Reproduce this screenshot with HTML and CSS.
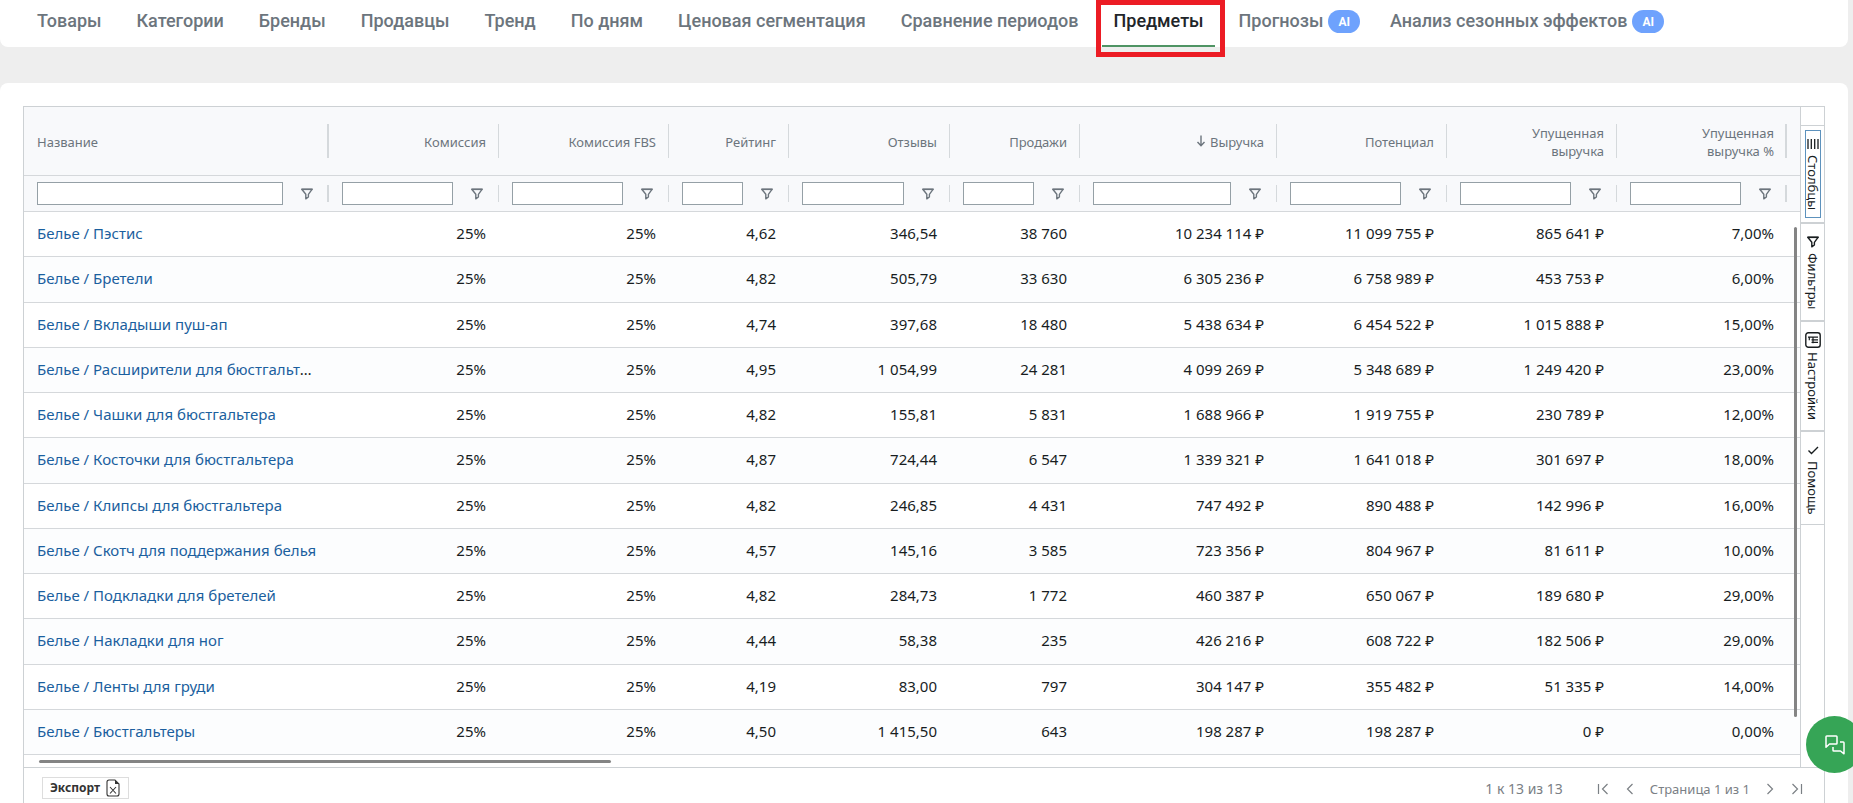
FILE: index.html
```html
<!DOCTYPE html>
<html lang="ru">
<head>
<meta charset="utf-8">
<title>Предметы</title>
<link rel="stylesheet" href="styles.css">
</head>
<body>
<svg class="sprite" aria-hidden="true">
  <symbol id="i-filter" viewBox="0 0 12 12"><path d="M.8 1.200h10.400L7.400 6.300v2.700L4.800 10.800V6.300z" fill="none" stroke="currentColor" stroke-width="1.400" stroke-linejoin="round"/><path d="M.5 1.400h11" stroke="currentColor" stroke-width="1.400"/></symbol>
</svg>

<nav class="tabs">
  <a class="tab" href="#">Товары</a>
  <a class="tab" href="#">Категории</a>
  <a class="tab" href="#">Бренды</a>
  <a class="tab" href="#">Продавцы</a>
  <a class="tab" href="#">Тренд</a>
  <a class="tab" href="#">По дням</a>
  <a class="tab" href="#">Ценовая сегментация</a>
  <a class="tab" href="#">Сравнение периодов</a>
  <a class="tab tab-active" href="#" aria-current="page">Предметы</a>
  <a class="tab tab-ai" href="#">Прогнозы <span class="badge">AI</span></a>
  <a class="tab tab-ai" href="#">Анализ сезонных эффектов <span class="badge">AI</span></a>
</nav>

<main class="panel">
  <div class="grid">
    <div class="grid-main">
      <div class="grid-view">
        <table class="table">
          <colgroup>
            <col class="c-name"><col class="c-l"><col class="c-l"><col class="c-xs"><col class="c-m"><col class="c-s"><col class="c-xl"><col class="c-l"><col class="c-l"><col class="c-l"><col>
          </colgroup>
          <thead>
            <tr class="head">
              <th class="edge">Название</th><th>Комиссия</th><th>Комиссия FBS</th><th>Рейтинг</th><th>Отзывы</th><th>Продажи</th>
              <th><svg class="sort" viewBox="0 0 10 12"><path d="M5 .5v10M1.500 7L5 10.800 8.500 7" fill="none" stroke="currentColor" stroke-width="1.400"/></svg>Выручка</th>
              <th>Потенциал</th><th>Упущенная<br>выручка</th><th class="edge">Упущенная<br>выручка %</th><th class="rest"></th>
            </tr>
            <tr class="filters">
              <td class="edge"><div class="filter"><input type="text" aria-label="Фильтр: Название"><button aria-label="Меню фильтра"><svg><use href="#i-filter"/></svg></button></div></td>
              <td><div class="filter"><input type="text" aria-label="Фильтр: Комиссия"><button aria-label="Меню фильтра"><svg><use href="#i-filter"/></svg></button></div></td>
              <td><div class="filter"><input type="text" aria-label="Фильтр: Комиссия FBS"><button aria-label="Меню фильтра"><svg><use href="#i-filter"/></svg></button></div></td>
              <td><div class="filter"><input type="text" aria-label="Фильтр: Рейтинг"><button aria-label="Меню фильтра"><svg><use href="#i-filter"/></svg></button></div></td>
              <td><div class="filter"><input type="text" aria-label="Фильтр: Отзывы"><button aria-label="Меню фильтра"><svg><use href="#i-filter"/></svg></button></div></td>
              <td><div class="filter"><input type="text" aria-label="Фильтр: Продажи"><button aria-label="Меню фильтра"><svg><use href="#i-filter"/></svg></button></div></td>
              <td><div class="filter"><input type="text" aria-label="Фильтр: Выручка"><button aria-label="Меню фильтра"><svg><use href="#i-filter"/></svg></button></div></td>
              <td><div class="filter"><input type="text" aria-label="Фильтр: Потенциал"><button aria-label="Меню фильтра"><svg><use href="#i-filter"/></svg></button></div></td>
              <td><div class="filter"><input type="text" aria-label="Фильтр: Упущенная выручка"><button aria-label="Меню фильтра"><svg><use href="#i-filter"/></svg></button></div></td>
              <td class="edge"><div class="filter"><input type="text" aria-label="Фильтр: Упущенная выручка %"><button aria-label="Меню фильтра"><svg><use href="#i-filter"/></svg></button></div></td>
              <td class="rest"></td>
            </tr>
          </thead>
          <tbody>
            <tr><td><a href="#">Белье / Пэстис</a></td><td>25%</td><td>25%</td><td>4,62</td><td>346,54</td><td>38 760</td><td>10 234 114 ₽</td><td>11 099 755 ₽</td><td>865 641 ₽</td><td>7,00%</td><td></td></tr>
            <tr><td><a href="#">Белье / Бретели</a></td><td>25%</td><td>25%</td><td>4,82</td><td>505,79</td><td>33 630</td><td>6 305 236 ₽</td><td>6 758 989 ₽</td><td>453 753 ₽</td><td>6,00%</td><td></td></tr>
            <tr><td><a href="#">Белье / Вкладыши пуш-ап</a></td><td>25%</td><td>25%</td><td>4,74</td><td>397,68</td><td>18 480</td><td>5 438 634 ₽</td><td>6 454 522 ₽</td><td>1 015 888 ₽</td><td>15,00%</td><td></td></tr>
            <tr><td><a href="#">Белье / Расширители для бюстгальтера</a></td><td>25%</td><td>25%</td><td>4,95</td><td>1 054,99</td><td>24 281</td><td>4 099 269 ₽</td><td>5 348 689 ₽</td><td>1 249 420 ₽</td><td>23,00%</td><td></td></tr>
            <tr><td><a href="#">Белье / Чашки для бюстгальтера</a></td><td>25%</td><td>25%</td><td>4,82</td><td>155,81</td><td>5 831</td><td>1 688 966 ₽</td><td>1 919 755 ₽</td><td>230 789 ₽</td><td>12,00%</td><td></td></tr>
            <tr><td><a href="#">Белье / Косточки для бюстгальтера</a></td><td>25%</td><td>25%</td><td>4,87</td><td>724,44</td><td>6 547</td><td>1 339 321 ₽</td><td>1 641 018 ₽</td><td>301 697 ₽</td><td>18,00%</td><td></td></tr>
            <tr><td><a href="#">Белье / Клипсы для бюстгальтера</a></td><td>25%</td><td>25%</td><td>4,82</td><td>246,85</td><td>4 431</td><td>747 492 ₽</td><td>890 488 ₽</td><td>142 996 ₽</td><td>16,00%</td><td></td></tr>
            <tr><td><a href="#">Белье / Скотч для поддержания белья</a></td><td>25%</td><td>25%</td><td>4,57</td><td>145,16</td><td>3 585</td><td>723 356 ₽</td><td>804 967 ₽</td><td>81 611 ₽</td><td>10,00%</td><td></td></tr>
            <tr><td><a href="#">Белье / Подкладки для бретелей</a></td><td>25%</td><td>25%</td><td>4,82</td><td>284,73</td><td>1 772</td><td>460 387 ₽</td><td>650 067 ₽</td><td>189 680 ₽</td><td>29,00%</td><td></td></tr>
            <tr><td><a href="#">Белье / Накладки для ног</a></td><td>25%</td><td>25%</td><td>4,44</td><td>58,38</td><td>235</td><td>426 216 ₽</td><td>608 722 ₽</td><td>182 506 ₽</td><td>29,00%</td><td></td></tr>
            <tr><td><a href="#">Белье / Ленты для груди</a></td><td>25%</td><td>25%</td><td>4,19</td><td>83,00</td><td>797</td><td>304 147 ₽</td><td>355 482 ₽</td><td>51 335 ₽</td><td>14,00%</td><td></td></tr>
            <tr><td><a href="#">Белье / Бюстгальтеры</a></td><td>25%</td><td>25%</td><td>4,50</td><td>1 415,50</td><td>643</td><td>198 287 ₽</td><td>198 287 ₽</td><td>0 ₽</td><td>0,00%</td><td></td></tr>
          </tbody>
        </table>
        <div class="vscroll"></div>
        <div class="hscroll"><div class="hthumb"></div></div>
      </div>
      <aside class="side">
        <div class="side-item"><button class="side-btn side-focus">
          <svg viewBox="0 0 12 12"><path d="M1 1v10M4.300 1v10M7.700 1v10M11 1v10" stroke="currentColor" stroke-width="1.300"/></svg><span>Столбцы</span></button></div>
        <div class="side-item"><button class="side-btn"><svg><use href="#i-filter"/></svg><span>Фильтры</span></button></div>
        <div class="side-item"><button class="side-btn">
          <svg class="i-set" viewBox="0 0 16 16"><rect x=".8" y=".8" width="14.400" height="14.400" rx="2.500" fill="none" stroke="currentColor" stroke-width="1.400"/><path d="M3 5.200h10M6.500 7.800H13M6.500 10.400H13M4.300 5.200v3M8 5.200v6" fill="none" stroke="currentColor" stroke-width="1.200"/></svg><span>Настройки</span></button></div>
        <div class="side-item"><button class="side-btn"><svg viewBox="0 0 12 12"><path d="M1.500 6.500L4.500 9.500 11 3" fill="none" stroke="currentColor" stroke-width="1.400"/></svg><span>Помощь</span></button></div>
      </aside>
    </div>
    <footer class="foot">
      <button class="export">Экспорт <svg viewBox="0 0 14 18"><path d="M9 1H3a2 2 0 0 0-2 2v12a2 2 0 0 0 2 2h8a2 2 0 0 0 2-2V5z" fill="none" stroke="currentColor" stroke-width="1.100"/><path d="M9 1l4 4H9z" fill="currentColor"/><path d="M4 8l6 6.500M10 8l-6 6.500" stroke="currentColor" stroke-width="1.100"/></svg></button>
      <span class="range">1 к 13 из 13</span>
      <div class="pager">
        <button aria-label="Первая"><svg viewBox="0 0 12 12"><path d="M1.500 1v10M10.500 1L5.500 6l5 5" /></svg></button>
        <button aria-label="Назад"><svg viewBox="0 0 12 12"><path d="M8.500 1L3.500 6l5 5"/></svg></button>
        <span class="page">Страница 1 из 1</span>
        <button aria-label="Вперед"><svg viewBox="0 0 12 12"><path d="M3.500 1l5 5-5 5"/></svg></button>
        <button aria-label="Последняя"><svg viewBox="0 0 12 12"><path d="M10.500 1v10M1.500 1l5 5-5 5"/></svg></button>
      </div>
    </footer>
  </div>
</main>

<button class="chat" aria-label="Чат"><svg viewBox="0 0 20 20"><path d="M1 1.800Q1 1 1.800 1h9.400q.8 0 .8.800v6.400q0 .8-.8.800H4.500L1 12.200zM15 7h3.200q.8 0 .8.800v11L15.500 16H8.800q-.8 0-.8-.8V12" fill="none" stroke="currentColor" stroke-width="1.500" stroke-linejoin="round"/></svg></button>
</body>
</html>
```
FILE: styles.css
```css
* { box-sizing: border-box; }
body {
  margin: 0;
  height: 100vh;
  padding-right: 5px;
  overflow: hidden;
  display: flex;
  flex-direction: column;
  gap: 36px;
  background: #eeeeee;
  color: #181d1f;
  font: 15px/20px "Noto Sans", "Open Sans", sans-serif;
}
button { margin: 0; padding: 0; border: 0; background: none; color: inherit; font: inherit; }
svg { display: block; }
.sprite { position: absolute; width: 0; height: 0; }

.tabs {
  display: flex;
  flex: none;
  gap: 13px;
  height: 47px;
  padding-left: 26px;
  background: #fff;
  border-radius: 0 0 8px 8px;
}
.tab {
  padding: 9px 11px 0;
  color: #6c757d;
  font: 500 18px/24px Roboto, sans-serif;
  text-decoration: none;
  white-space: nowrap;
}
.tab-active {
  position: relative;
  color: #212529;
  border-bottom: 2px solid #4f9464;
}
.tab-active::after {
  content: "";
  position: absolute;
  inset: 0 -10px -12px -6px;
  border: 5px solid #ec1c24;
}
.tab-ai { display: flex; gap: 5px; padding-right: 6px; }
.badge {
  height: 23px;
  margin-top: 1px;
  padding: 0 10px;
  border-radius: 12px;
  background: #6ea2fd;
  color: #fff;
  font: 700 12px/24px Roboto, sans-serif;
}

.panel {
  flex: 1;
  min-height: 0;
  padding: 23px 23px 0;
  display: flex;
  background: #fff;
  border-radius: 8px 8px 0 0;
}
.grid {
  flex: 1;
  min-width: 0;
  display: flex;
  flex-direction: column;
  border: 1px solid #cdd1d4;
  border-bottom: 0;
}
.grid-main { flex: 1; min-height: 0; display: flex; }
.grid-view {
  position: relative;
  flex: 1;
  min-width: 0;
  display: flex;
  flex-direction: column;
  overflow: hidden;
}
.table {
  flex: 1;
  width: 100%;
  table-layout: fixed;
  border-collapse: separate;
  border-spacing: 0;
}
.c-name { width: 305px; }
.c-xs { width: 120px; }
.c-s { width: 130px; }
.c-m { width: 161px; }
.c-l { width: 170px; }
.c-xl { width: 197px; }

.table th, .table td {
  padding: 0 13px;
  border-bottom: 1px solid #d5d8db;
  text-align: right;
  white-space: nowrap;
  overflow: hidden;
  text-overflow: ellipsis;
}
.table th:first-child, .table td:first-child { text-align: left; }
.table .head th {
  height: 69px;
  padding-top: 2px;
  background: linear-gradient(#d5d9dc, #d5d9dc) no-repeat right center / 1px 34px #f8f9fb;
  color: #6c757d;
  font-size: 13px;
  font-weight: 400;
  line-height: 18px;
}
.table .filters td {
  height: 36px;
  background: linear-gradient(#d5d9dc, #d5d9dc) no-repeat right center / 1px 17px #f8f9fb;
}
.table .head .edge { background-size: 2px 34px; }
.table .filters .edge { background-size: 2px 17px; }
.table .head .rest, .table .filters .rest { padding: 0; background: #f8f9fb; }
.sort { display: inline-block; width: 10px; height: 12px; margin-right: 4px; }
.filter { display: flex; align-items: center; gap: 18px; padding-right: 3px; color: #6c757d; }
.filter input {
  flex: 1;
  min-width: 0;
  height: 23px;
  padding: 0 4px;
  border: 1px solid #95a0a6;
  background: #fff;
  font: inherit;
}
.filter svg { width: 12px; height: 12px; }
.table tbody tr:nth-child(even) { background: #fcfdfe; }
.table tbody td { padding-bottom: 2px; }
.table tbody td:first-child { padding-right: 10px; }
.table a { color: #1b5f9e; text-decoration: none; }

.vscroll {
  position: absolute;
  top: 120px;
  right: 3px;
  bottom: 50px;
  width: 3px;
  border-radius: 2px;
  background: #848484;
}
.hscroll { flex: none; height: 12px; padding: 5px 0 0 15px; }
.hthumb { width: 32.5%; height: 3px; border-radius: 2px; background: #848484; }

.side {
  flex: none;
  width: 24px;
  padding-top: 18px;
  border-left: 1px solid #cdd1d4;
  color: #181d1f;
}
.side-item { border-top: 1px solid #cdd1d4; border-bottom: 1px solid #cdd1d4; padding: 5px 0; }
.side-btn {
  display: flex;
  flex-direction: column;
  align-items: center;
  gap: 5px;
  width: 14px;
  margin: 0 5px;
  padding: 7px 0 5px;
}
.side-focus { padding-bottom: 7px; outline: 1px solid #5d92bd; }
.side-btn svg { flex: none; width: 12px; height: 12px; }
.side-btn .i-set { width: 16px; height: 16px; margin: -2px 0 -1px; }
.side-btn span { writing-mode: vertical-rl; font-size: 13px; line-height: 20px; }

.foot {
  flex: none;
  height: 36px;
  padding: 0 21px 0 18px;
  display: flex;
  align-items: center;
  border-top: 1px solid #cdd1d4;
  color: #7b8085;
}
.export {
  display: flex;
  align-items: center;
  gap: 6px;
  height: 22px;
  margin: 5px auto 0 0;
  padding: 0 8px 0 7px;
  border: 1px solid #dddddd;
  color: #333;
  font-size: 12px;
  font-weight: 700;
}
.export svg { width: 14px; height: 18px; }
.range { margin: 6px 34px 0 0; font-size: 14px; }
.pager { display: flex; align-items: center; gap: 15px; margin-top: 6px; font-size: 13px; }
.pager svg { width: 12px; height: 12px; fill: none; stroke: currentColor; stroke-width: 1.2; }
.page { margin: 0 -1px; }

.chat {
  position: fixed;
  right: -10px;
  bottom: 30px;
  width: 57px;
  height: 57px;
  display: grid;
  place-items: center;
  border-radius: 50%;
  background: #36a556;
  color: #fff;
}
.chat svg { width: 20px; height: 20px; }
```
